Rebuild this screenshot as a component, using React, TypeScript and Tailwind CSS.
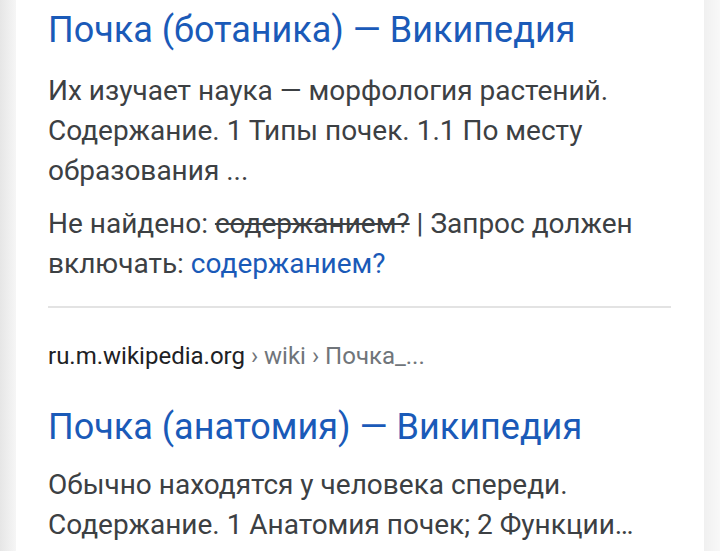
import React from "react";

export default function App() {
  return (
    <div className="flex w-[720px] h-[551px] overflow-hidden bg-white" style={{ fontFamily: "Roboto, 'Noto Sans', sans-serif" }}>
      <div className="w-[16px] shrink-0 bg-gradient-to-r from-[#e6e6e6] to-[#f6f6f6]" />
      <div className="flex-1 bg-white pl-[32px] pr-[33px]">
        <div className="mt-[6px]">
          <div className="text-[36px] leading-[48px] text-[#1a5ab8] whitespace-nowrap">Почка (ботаника) — Википедия</div>
          <div className="mt-[17px] text-[28px] leading-[40px] text-[#3c4043]">
            Их изучает наука — морфология растений. Содержание. 1 Типы почек. 1.1 По месту образования ...
          </div>
          <div className="mt-[13px] text-[28px] leading-[40px] text-[#3c4043]">
            Не найдено: <span className="line-through">содержанием?</span> | Запрос должен включать:{" "}
            <span className="text-[#1a5ab8]">содержанием?</span>
          </div>
          <div className="mt-[22px] h-[2px] bg-[#e3e3e3]" />
          <div className="mt-[32px] text-[24px] leading-[32px] text-[#202124] whitespace-nowrap">
            ru.m.wikipedia.org <span className="text-[#70757a]">› wiki › Почка_...</span>
          </div>
          <div className="mt-[31px] text-[36px] leading-[48px] text-[#1a5ab8] whitespace-nowrap">Почка (анатомия) — Википедия</div>
          <div className="mt-[14px] text-[28px] leading-[40px] text-[#3c4043]">
            Обычно находятся у человека спереди. Содержание. 1 Анатомия почек; 2 Функции…
          </div>
        </div>
      </div>
      <div className="w-[16px] shrink-0 bg-gradient-to-r from-[#f0f0f0] to-[#f8f8f8]" />
    </div>
  );
}
